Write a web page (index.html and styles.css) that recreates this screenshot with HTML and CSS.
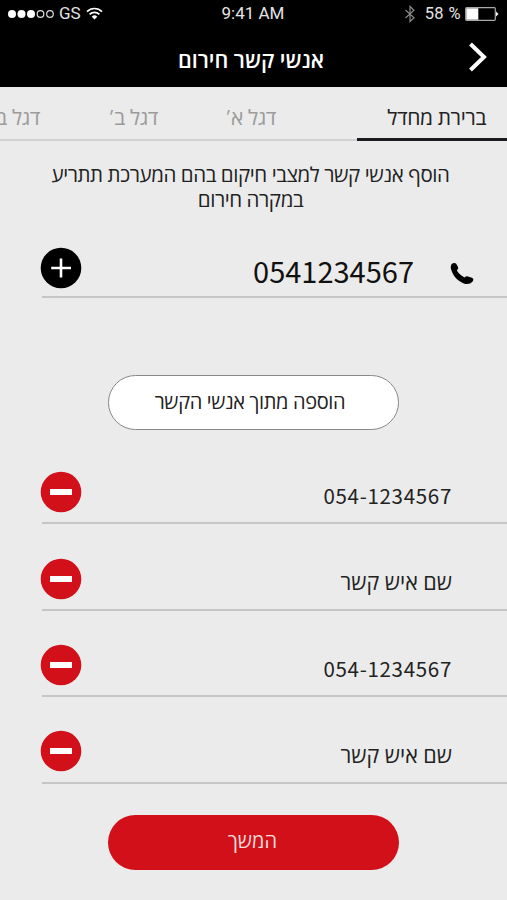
FILE: index.html
```html
<!DOCTYPE html>

<html lang="he" dir="rtl">
    <head>
        <meta charset="UTF-8" />
        <meta name="viewport" content="width=device-width, initial-scale=1.0" />
        <title>אנשי קשר חירום</title>
        <link rel="stylesheet" href="styles.css">
    </head>
    <body>
        <header>
            <div class="status-bar" dir="ltr">
                <div class="status-left">
                    <svg width="48" height="12" viewBox="0 0 48 12">
                        <g fill="#fff">
                            <circle cx="5" cy="6" r="4" />
                            <circle cx="14.5" cy="6" r="4" />
                            <circle cx="24" cy="6" r="4" />
                        </g>
                        <g fill="none" stroke="#ddd" stroke-width="1.2">
                            <circle cx="33.5" cy="6" r="3.3" />
                            <circle cx="43" cy="6" r="3.3" />
                        </g>
                    </svg>
                    <span class="carrier">GS</span>
                    <svg width="17" height="13" viewBox="0 0 17 13" fill="none" stroke="#fff" stroke-width="1.7">
                        <path d="M1 4.6A10.6 10.6 0 0 1 16 4.6" />
                        <path d="M3.6 7.4A7 7 0 0 1 13.4 7.4" />
                        <path d="M5.7 9.7A4 4 0 0 1 11.3 9.7L8.5 12.6Z" fill="#fff" stroke="none" />
                    </svg>
                </div>
                <div class="status-time">9:41 AM</div>
                <div class="status-right">
                    <svg width="12" height="18" viewBox="0 0 12 18" fill="none" stroke="#888" stroke-width="1.2">
                        <path d="M1.5 5L10 12.7L6 16.5V1.5L10 5.3L1.5 13" />
                    </svg>
                    <span class="battery-text">58 %</span>
                    <svg width="34" height="14" viewBox="0 0 34 14">
                        <rect x="0.7" y="0.7" width="29.6" height="12.6" rx="1" fill="none" stroke="#aaa" stroke-width="1.2" />
                        <rect x="1.3" y="1.3" width="12" height="11.4" fill="#fff" />
                        <path d="M31 4.5L33.5 7L31 9.5Z" fill="#fff" />
                    </svg>
                </div>
            </div>
            <div class="title-bar">
                <svg class="back" width="18" height="30" viewBox="0 0 18 30" fill="none" stroke="#fff" stroke-width="4">
                    <path d="M1.5 2L15 15L1.5 28" />
                </svg>
                <h1>אנשי קשר חירום</h1>
            </div>
        </header>

        <nav class="tabs">
            <div class="tab active">ברירת מחדל</div>
            <div class="tab">דגל א<span class="geresh">׳</span></div>
            <div class="tab">דגל ב<span class="geresh">׳</span></div>
            <div class="tab">דגל ב<span class="geresh">׳</span></div>
        </nav>

        <main>
            <p class="intro">הוסף אנשי קשר למצבי חיקום בהם המערכת תתריע<br>במקרה חירום</p>

            <div class="row phone-row">
                <svg class="phone" width="24" height="23" viewBox="0 0 24 23">
                    <path d="M1.8 2C3 .6 5.2.5 6.2 1.8L8 5C8.6 6.3 8.1 7.4 6.8 8.3C8 11 11.2 13.8 14.6 15.4C15.6 14.5 16.7 14.1 17.8 14.5L22 15.7C23.6 16.3 23.8 18 22.6 19.4C20.6 21.8 17.4 22.5 13.8 21.4C7.4 19 2.6 13.4 1 7C.5 4.9.8 3.2 1.8 2Z" />
                </svg>
                <span class="number">0541234567</span>
                <svg class="circle" width="42" height="42" viewBox="0 0 42 42">
                    <circle cx="21" cy="21" r="20.3" />
                    <path d="M11.2 21H31M21 11.5V30.5" stroke="#fff" stroke-width="2.6" />
                </svg>
            </div>

            <button class="outline">הוספה מתוך אנשי הקשר</button>

            <div class="contacts">
                <div class="row">
                    <span class="digits">054-1234567</span>
                    <svg class="circle" width="42" height="42" viewBox="0 0 42 42">
                        <circle cx="21" cy="21" r="20.3" fill="#d21019" />
                        <rect x="10" y="18" width="22" height="6" fill="#fff" />
                    </svg>
                </div>
                <div class="row">
                    <span class="name">שם איש קשר</span>
                    <svg class="circle" width="42" height="42" viewBox="0 0 42 42">
                        <circle cx="21" cy="21" r="20.3" fill="#d21019" />
                        <rect x="10" y="18" width="22" height="6" fill="#fff" />
                    </svg>
                </div>
                <div class="row">
                    <span class="digits">054-1234567</span>
                    <svg class="circle" width="42" height="42" viewBox="0 0 42 42">
                        <circle cx="21" cy="21" r="20.3" fill="#d21019" />
                        <rect x="10" y="18" width="22" height="6" fill="#fff" />
                    </svg>
                </div>
                <div class="row">
                    <span class="name">שם איש קשר</span>
                    <svg class="circle" width="42" height="42" viewBox="0 0 42 42">
                        <circle cx="21" cy="21" r="20.3" fill="#d21019" />
                        <rect x="10" y="18" width="22" height="6" fill="#fff" />
                    </svg>
                </div>
            </div>

            <button class="submit">המשך</button>
        </main>
    </body>
</html>
```
FILE: styles.css
```css
* {
    box-sizing: border-box;
}
body {
    margin: 0;
    height: 900px;
    overflow: hidden;
    background-color: #ebebeb;
    color: #222;
    font-family: "Open Sans", "Noto Sans", sans-serif;
}
svg {
    display: block;
    flex-shrink: 0;
}
header {
    height: 87px;
    background-color: #000;
    color: #fff;
}
/* Status bar */
.status-bar {
    display: grid;
    grid-template-columns: 1fr auto 1fr;
    align-items: center;
    height: 27px;
    padding: 0 8px 0 7px;
    font-family: Roboto, sans-serif;
    font-size: 16px;
    color: #e4e4e4;
}
.status-left,
.status-right {
    display: flex;
    align-items: center;
}
.status-right {
    justify-content: flex-end;
}
.status-time {
    margin-top: -1px;
    font-size: 17px;
}
.carrier {
    margin: -1px 5px 0 4px;
    font-size: 17px;
}
.battery-text {
    margin: 0 4px 0 9px;
    font-size: 16.5px;
    letter-spacing: 0.4px;
}
/* Title */
.title-bar {
    display: grid;
    grid-template-columns: 40px 1fr 40px;
    align-items: center;
    height: 60px;
}
.back {
    margin-right: 20px;
}
h1 {
    margin: 5px 0 0;
    padding-right: 5px;
    font-size: 21.5px;
    font-weight: 600;
    line-height: 30px;
    text-align: center;
    white-space: nowrap;
}
/* Tabs */
.tabs {
    display: flex;
    height: 54px;
    border-bottom: 2px solid #d2d2d2;
    font-size: 21px;
    letter-spacing: -0.4px;
    line-height: 30px;
    color: #9b9b9b;
    white-space: nowrap;
}
.tab {
    flex: 0 0 118px;
    padding-top: 15px;
    padding-right: 1px;
}
.tab.active {
    flex-basis: 150px;
    height: 54px;
    margin-left: 80px;
    padding-right: 21px;
    border-bottom: 3px solid #1b1b20;
    color: #222;
}
.geresh {
    font-size: 16px;
    vertical-align: 2px;
    line-height: 1;
}
/* Content */
.intro {
    height: 50px;
    margin: 21px 0 0;
    padding-right: 6px;
    font-size: 20.5px;
    letter-spacing: -0.42px;
    line-height: 25px;
    text-align: center;
    white-space: nowrap;
}
.row {
    display: flex;
    align-items: center;
    height: 86.4px;
    margin-left: 42px;
    padding-right: 55px;
    border-bottom: 2px solid #c6c6c6;
    font-size: 21px;
}
.circle {
    margin-right: auto;
    margin-left: -2px;
    margin-top: 24px;
}
.phone-row {
    height: 86px;
    padding-right: 33px;
}
.phone-row .circle {
    margin-top: 27px;
}
.phone {
    margin-top: 38px;
}
.number {
    margin-top: 32px;
    margin-right: 36px;
    font-family: "Noto Sans CJK JP", sans-serif;
    font-size: 29px;
    line-height: 40px;
    color: #111;
}
.digits {
    margin-top: 30px;
    font-family: "Noto Sans CJK JP", sans-serif;
    font-size: 20.5px;
    letter-spacing: 0.7px;
    line-height: 30px;
}
.name {
    margin-top: 31px;
    font-size: 21.5px;
    line-height: 30px;
}
button {
    display: block;
    width: 291px;
    height: 55px;
    margin: 0 108px 0 auto;
    padding: 0 0 3px;
    border: 0;
    border-radius: 28px;
    font-family: inherit;
    font-size: 20px;
    cursor: pointer;
}
.outline {
    margin-top: 77px;
    padding-right: 7px;
    border: 1px solid #888;
    background-color: #fff;
    color: #222;
    letter-spacing: -0.35px;
}
.contacts {
    margin-top: 8px;
}
.submit {
    margin-top: 31px;
    padding-right: 2px;
    background-color: #d21019;
    color: #f8dcdc;
}
```
